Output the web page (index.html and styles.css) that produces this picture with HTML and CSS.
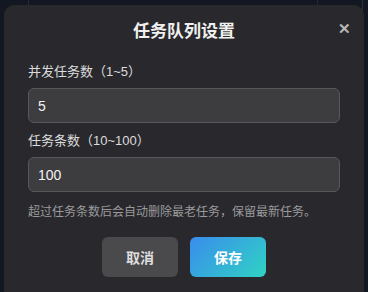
FILE: index.html
```html
<!DOCTYPE html>
<html lang="zh-CN">
<head>
    <meta charset="utf-8" />
    <title>任务队列设置</title>
    <link rel="stylesheet" href="styles.css">
</head>
<body>
    <div class="dialog">
        <span class="dialog-close">&#10005;</span>
        <div class="dialog-title">任务队列设置</div>
        <div class="field">
            <label class="field-label">并发任务数（1~5）</label>
            <input type="text" class="field-input" value="5" />
        </div>
        <div class="field">
            <label class="field-label">任务条数（10~100）</label>
            <input type="text" class="field-input" value="100" />
        </div>
        <div class="field-hint">超过任务条数后会自动删除最老任务，保留最新任务。</div>
        <div class="dialog-buttons">
            <button class="btn btn-cancel">取消</button>
            <button class="btn btn-save">保存</button>
        </div>
    </div>
</body>
</html>
```

FILE: styles.css
```css
html, body { margin: 0; height: 100%; overflow: hidden; }
body {
    background-color: #131722;
    background-image: linear-gradient(90deg, transparent 28px, #262a36 28px, #262a36 29px, transparent 29px, transparent 317px, #262a36 317px, #262a36 318px, transparent 318px, transparent 362px, #2c303b 362px, #2c303b 363px, transparent 363px);
    font-family: "Liberation Sans", "Noto Sans CJK SC", sans-serif;
}
.dialog { position: relative; box-sizing: border-box; width: 360px; height: 287px; margin: 5px 0 0 4px; padding: 18px 24px 0; background: #29292d; border-radius: 10px 10px 0 0; color: #e4e4e4; }
.dialog-close { position: absolute; top: 15px; right: 13px; font-size: 15px; line-height: 18px; font-weight: bold; color: #b8b8b8; cursor: pointer; }
.dialog-title { text-align: center; font-size: 17px; line-height: 18px; font-weight: bold; color: #f0f0f0; }
.field { display: flex; flex-direction: column; }
.field-label { display: block; margin-top: 22px; font-size: 13px; line-height: 18px; color: #dcdcdc; }
.field + .field .field-label { margin-top: 9px; }
.field-input { box-sizing: border-box; width: 312px; height: 35px; margin-top: 7px; padding: 0 9px; border: 1px solid #58585c; border-radius: 6px; background: #3d3d40; color: #f2f2f2; font-family: inherit; font-size: 14px; outline: none; }
.field-hint { margin-top: 11px; font-size: 12px; line-height: 18px; color: #9a9a9c; }
.dialog-buttons { display: flex; justify-content: center; gap: 12px; margin-top: 16px; }
.btn { width: 76px; height: 40px; border: 0; border-radius: 6px; font-family: inherit; font-size: 14px; font-weight: bold; cursor: pointer; }
.btn-cancel { background: #4a4a4d; color: #dedede; }
.btn-save { background: linear-gradient(135deg, #3a8cec, #2fd3c4); color: #ffffff; }
```
